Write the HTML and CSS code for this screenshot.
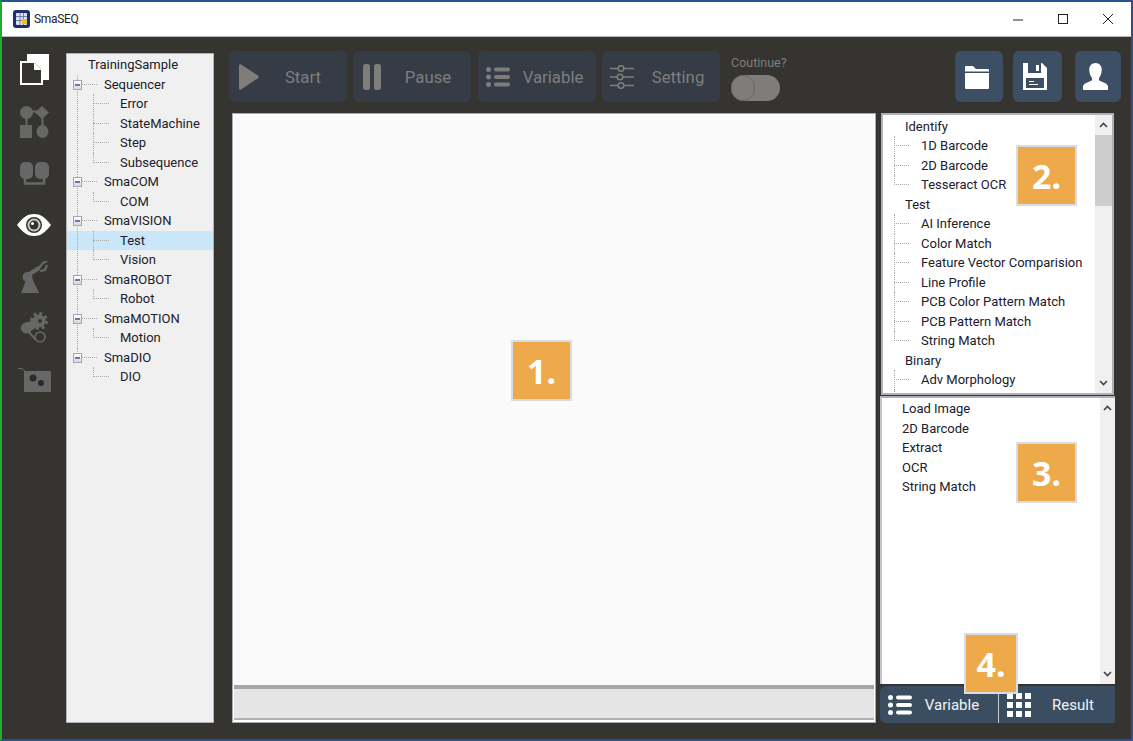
FILE: index.html
```html
<!DOCTYPE html>
<html lang="en">
<head>
    <meta charset="UTF-8">
    <meta name="viewport" content="width=device-width, initial-scale=1.0">
    <title>SmaSEQ</title>
    <link rel="stylesheet" href="styles.css">
</head>
<body>
<div class="window">
    <header class="titlebar">
        <svg class="app-icon" width="17" height="18" viewBox="0 0 17 18">
            <rect width="17" height="18" rx="3" fill="#1c2f6e"/>
            <rect x="3" y="3" width="11" height="12" rx="1" fill="#dfe3ee"/>
            <path d="M3 6.500h11M3 10.500h11M7 3v12M10.500 3v12" stroke="#6f80aa" stroke-width="1"/>
            <rect x="9" y="9" width="5" height="5" fill="#f0c020"/>
        </svg>
        <span class="app-name">SmaSEQ</span>
        <div class="window-buttons">
            <svg width="12" height="12" viewBox="0 0 12 12"><path d="M1 7h10" stroke="#222" fill="none"/></svg>
            <svg width="12" height="12" viewBox="0 0 12 12"><rect x="1.5" y="1.5" width="9" height="9" stroke="#222" fill="none"/></svg>
            <svg width="12" height="12" viewBox="0 0 12 12"><path d="M1 1l10 10M11 1L1 11" stroke="#222" fill="none"/></svg>
        </div>
    </header>

    <div class="body">
        <nav class="rail">
            <div class="rail-slot">
                <svg width="29" height="31" viewBox="0 0 29 31">
                    <rect x="7" width="22" height="26" fill="#fff"/>
                    <rect y="7" width="23" height="24" fill="#fff"/>
                    <path d="M2 9h13l6 6v14H2z" fill="#353431"/>
                    <path d="M14 9h1l6 6v1h-7z" fill="#fff"/>
                </svg>
            </div>
            <div class="rail-slot">
                <svg width="29" height="32" viewBox="0 0 29 32" fill="#676767">
                    <circle cx="6.500" cy="6.500" r="6.500"/>
                    <path d="M22 0l7 6.500-7 6.500-7-6.500z"/>
                    <rect y="19" width="12" height="13"/>
                    <ellipse cx="22.500" cy="25.500" rx="6" ry="6.500"/>
                    <path d="M8 5.500h10M6.500 10v10M22.500 10v10" stroke="#676767" stroke-width="2"/>
                </svg>
            </div>
            <div class="rail-slot">
                <svg width="29" height="23" viewBox="0 0 29 23" fill="#676767">
                    <rect width="13" height="17" rx="5"/>
                    <rect x="15" width="14" height="17" rx="5"/>
                    <path d="M5 15v6.500h19V15" fill="none" stroke="#676767" stroke-width="2.500"/>
                </svg>
            </div>
            <div class="rail-slot">
                <svg width="34" height="22" viewBox="0 0 34 22">
                    <path d="M0 11C6 3 11 0 17 0s11 3 17 11c-6 8-11 11-17 11S6 19 0 11z" fill="#fff"/>
                    <circle cx="17" cy="11" r="8" fill="#353431"/>
                    <circle cx="17" cy="11" r="6.500" fill="#ccc"/>
                    <circle cx="17" cy="11" r="4.500" fill="#333"/>
                    <circle cx="15.500" cy="9.500" r="1.500" fill="#fff"/>
                </svg>
            </div>
            <div class="rail-slot">
                <svg width="27" height="32" viewBox="0 0 27 32" fill="#676767">
                    <path d="M0 32l6-15h5l7 15z"/>
                    <circle cx="6.500" cy="16" r="5"/>
                    <path d="M7 14L18 7" stroke="#676767" stroke-width="4" fill="none"/>
                    <path d="M17 8l5-6 4-2M19 10l5-1 2-5" stroke="#676767" stroke-width="2.200" fill="none"/>
                </svg>
            </div>
            <div class="rail-slot">
                <svg width="27" height="32" viewBox="0 0 27 32" fill="#676767">
                    <circle cx="18" cy="9" r="6.500"/>
                    <circle cx="18" cy="9" r="7.500" fill="none" stroke="#676767" stroke-width="3" stroke-dasharray="3 2.900"/>
                    <circle cx="5.500" cy="16" r="5.500"/>
                    <path d="M4 11l12-4 3 6-12 8z"/>
                    <circle cx="19" cy="25" r="5" fill="none" stroke="#676767" stroke-width="1.500"/>
                    <path d="M7 19l8 9" stroke="#676767" stroke-width="2"/>
                    <circle cx="19" cy="9" r="2" fill="#353431"/>
                </svg>
            </div>
            <div class="rail-slot">
                <svg width="33" height="24" viewBox="0 0 33 24" fill="#676767">
                    <path d="M0 0h4l2.500 2.500H7V3h25a1 1 0 0 1 1 1v19a1 1 0 0 1-1 1H6V3L3.500 1H0z"/>
                    <circle cx="15" cy="10" r="3.500" fill="#2b2a28"/>
                    <circle cx="23" cy="15" r="3" fill="#2b2a28"/>
                </svg>
            </div>
        </nav>

        <aside class="panel project-tree">
            <ul class="tree">
                <li class="root"><span class="row">TrainingSample</span>
                    <ul>
                        <li class="group"><i class="expander"></i><span class="row">Sequencer</span>
                            <ul>
                                <li><span class="row">Error</span></li>
                                <li><span class="row">StateMachine</span></li>
                                <li><span class="row">Step</span></li>
                                <li><span class="row">Subsequence</span></li>
                            </ul>
                        </li>
                        <li class="group"><i class="expander"></i><span class="row">SmaCOM</span>
                            <ul>
                                <li><span class="row">COM</span></li>
                            </ul>
                        </li>
                        <li class="group"><i class="expander"></i><span class="row">SmaVISION</span>
                            <ul>
                                <li><span class="row selected">Test</span></li>
                                <li><span class="row">Vision</span></li>
                            </ul>
                        </li>
                        <li class="group"><i class="expander"></i><span class="row">SmaROBOT</span>
                            <ul>
                                <li><span class="row">Robot</span></li>
                            </ul>
                        </li>
                        <li class="group"><i class="expander"></i><span class="row">SmaMOTION</span>
                            <ul>
                                <li><span class="row">Motion</span></li>
                            </ul>
                        </li>
                        <li class="group"><i class="expander"></i><span class="row">SmaDIO</span>
                            <ul>
                                <li><span class="row">DIO</span></li>
                            </ul>
                        </li>
                    </ul>
                </li>
            </ul>
        </aside>

        <main class="content">
            <div class="toolbar">
                <button class="tool tool-start">
                    <svg width="20" height="26" viewBox="0 0 20 26"><path d="M0 1.500C0 .5 1 0 2 .5l17 11c1 .7 1 2 0 2.700L2 25.500c-1 .5-2 0-2-1z" fill="#7f7d7a"/></svg>
                    <span class="tool-label">Start</span>
                </button>
                <button class="tool tool-pause">
                    <svg width="18" height="26" viewBox="0 0 18 26" fill="#7f7d7a"><rect width="7" height="26" rx="2.500"/><rect x="11" width="7" height="26" rx="2.500"/></svg>
                    <span class="tool-label">Pause</span>
                </button>
                <button class="tool tool-variable">
                    <svg width="24" height="20" viewBox="0 0 24 20" fill="#7f7d7a"><circle cx="2.500" cy="2.500" r="2.500"/><circle cx="2.500" cy="10" r="2.500"/><circle cx="2.500" cy="17.500" r="2.500"/><rect x="8" y="0.500" width="16" height="4" rx="2"/><rect x="8" y="8" width="16" height="4" rx="2"/><rect x="8" y="15.500" width="16" height="4" rx="2"/></svg>
                    <span class="tool-label">Variable</span>
                </button>
                <button class="tool tool-setting">
                    <svg width="24" height="24" viewBox="0 0 24 24" fill="none" stroke="#7f7d7a" stroke-width="1.500"><path d="M0 3.500h8m6 0h10M0 12h7m6 0h11M0 20.500h8m6 0h10"/><circle cx="11" cy="3.500" r="2.800"/><circle cx="10" cy="12" r="2.800"/><circle cx="11" cy="20.500" r="2.800"/></svg>
                    <span class="tool-label">Setting</span>
                </button>
                <div class="continue">
                    <span class="continue-label">Coutinue?</span>
                    <span class="toggle"><i class="knob"></i></span>
                </div>
                <div class="file-buttons">
                    <button class="square folder">
                        <svg width="24" height="24" viewBox="0 0 24 24" fill="#fff"><path d="M0 2a1 1 0 0 1 1-1h7l3 3h12a1 1 0 0 1 1 1v1.500H0z"/><path d="M0 8h24v15a1 1 0 0 1-1 1H1a1 1 0 0 1-1-1z"/></svg>
                    </button>
                    <button class="square save">
                        <svg width="24" height="27" viewBox="0 0 24 27"><path d="M0 0h19l5 5v22H0z" fill="#fff"/><rect x="5" y="0" width="13" height="10" fill="#3c4f65"/><rect x="13" y="2" width="3" height="6" fill="#fff"/><rect x="3" y="15" width="18" height="10" fill="#3c4f65"/><path d="M6 18h5v1H6zM6 21h9v1H6z" fill="#fff"/></svg>
                    </button>
                    <button class="square user">
                        <svg width="25" height="27" viewBox="0 0 26 28" fill="#fff"><path d="M13 0c4 0 6.500 3 6.500 7 0 3-1 6-2.500 8-1 1.500-.5 3 1 3.600 3 1.200 7 2.400 8 5.400v4H0v-4c1-3 5-4.200 8-5.400 1.500-.6 2-2.100 1-3.600-1.500-2-2.500-5-2.500-8 0-4 2.500-7 6.500-7z"/></svg>
                    </button>
                </div>
            </div>

            <div class="workspace">
                <section class="panel canvas-panel">
                    <div class="canvas"></div>
                    <div class="status"></div>
                </section>

                <section class="side">
                    <div class="panel library">
                        <ul class="tree tools-tree">
                            <li class="cat"><span class="row">Identify</span>
                                <ul>
                                    <li><span class="row">1D Barcode</span></li>
                                    <li><span class="row">2D Barcode</span></li>
                                    <li><span class="row">Tesseract OCR</span></li>
                                </ul>
                            </li>
                            <li class="cat"><span class="row">Test</span>
                                <ul>
                                    <li><span class="row">AI Inference</span></li>
                                    <li><span class="row">Color Match</span></li>
                                    <li><span class="row">Feature Vector Comparision</span></li>
                                    <li><span class="row">Line Profile</span></li>
                                    <li><span class="row">PCB Color Pattern Match</span></li>
                                    <li><span class="row">PCB Pattern Match</span></li>
                                    <li><span class="row">String Match</span></li>
                                </ul>
                            </li>
                            <li class="cat"><span class="row">Binary</span>
                                <ul>
                                    <li><span class="row">Adv Morphology</span></li>
                                    <li><span class="row">&nbsp;</span></li>
                                </ul>
                            </li>
                        </ul>
                        <div class="scrollbar">
                            <svg class="chevron" width="9" height="6" viewBox="0 0 9 6"><path d="M1 5l3.500-3.500L8 5" fill="none" stroke="#444" stroke-width="1.600"/></svg>
                            <div class="track"><div class="thumb"></div></div>
                            <svg class="chevron" width="9" height="6" viewBox="0 0 9 6"><path d="M1 1l3.500 3.500L8 1" fill="none" stroke="#444" stroke-width="1.600"/></svg>
                        </div>
                    </div>

                    <div class="steps-box">
                        <ul class="steps">
                            <li>Load Image</li>
                            <li>2D Barcode</li>
                            <li>Extract</li>
                            <li>OCR</li>
                            <li>String Match</li>
                        </ul>
                        <div class="scrollbar plain">
                            <svg class="chevron" width="9" height="6" viewBox="0 0 9 6"><path d="M1 5l3.500-3.500L8 5" fill="none" stroke="#444" stroke-width="1.600"/></svg>
                            <div class="track"></div>
                            <svg class="chevron" width="9" height="6" viewBox="0 0 9 6"><path d="M1 1l3.500 3.500L8 1" fill="none" stroke="#444" stroke-width="1.600"/></svg>
                        </div>
                    </div>

                    <div class="tabs">
                        <button class="tab tab-variable">
                            <svg width="24" height="20" viewBox="0 0 24 20" fill="#fff"><circle cx="2.500" cy="2.500" r="2.500"/><circle cx="2.500" cy="10" r="2.500"/><circle cx="2.500" cy="17.500" r="2.500"/><rect x="8" y="0.500" width="16" height="4" rx="2"/><rect x="8" y="8" width="16" height="4" rx="2"/><rect x="8" y="15.500" width="16" height="4" rx="2"/></svg>
                            <span>Variable</span>
                        </button>
                        <button class="tab tab-result">
                            <svg width="24" height="24" viewBox="0 0 24 24" fill="#fff"><rect width="6" height="6"/><rect x="9" width="6" height="6"/><rect x="18" width="6" height="6"/><rect y="9" width="6" height="6"/><rect x="9" y="9" width="6" height="6"/><rect x="18" y="9" width="6" height="6"/><rect y="18" width="6" height="6"/><rect x="9" y="18" width="6" height="6"/><rect x="18" y="18" width="6" height="6"/></svg>
                            <span>Result</span>
                        </button>
                    </div>
                </section>
            </div>
        </main>
    </div>

    <div class="badge badge-1">1.</div>
    <div class="badge badge-2">2.</div>
    <div class="badge badge-3">3.</div>
    <div class="badge badge-4">4.</div>
</div>
</body>
</html>
```

FILE: styles.css
```css
* {
    box-sizing: border-box;
}
html, body {
    margin: 0;
    height: 100%;
    overflow: hidden;
}
body {
    font-family: Roboto, Arial, sans-serif;
    font-size: 13px;
    color: #20202c;
    background: #fff;
}
button {
    font-family: inherit;
    border: none;
    padding: 0;
    cursor: pointer;
}
ul {
    list-style: none;
    margin: 0;
    padding: 0;
}

.window {
    position: relative;
    width: 1133px;
    height: 741px;
    display: flex;
    flex-direction: column;
    border-top: 2px solid #2b5190;
    border-left: 2px solid #1fae2c;
    border-right: 2px solid #2b5190;
    border-bottom: 2px solid #2b5190;
}

.titlebar {
    height: 35px;
    display: flex;
    align-items: center;
    padding: 0 0 0 11px;
    background: #fff;
    border-bottom: 1px solid #b8b8b8;
}
.app-name {
    margin-left: 4px;
    font-size: 12px;
    letter-spacing: -0.3px;
    color: #222;
}
.window-buttons {
    margin-left: auto;
    margin-right: 17px;
    display: flex;
    gap: 33px;
}

.body {
    flex: 1;
    display: flex;
    min-height: 0;
    background: #353431;
    padding: 14px 10px 16px 15px;
}

.rail {
    width: 47px;
    margin-top: -7px;
    padding-right: 13px;
}
.rail-slot {
    height: 51.7px;
    display: flex;
    align-items: center;
    justify-content: center;
}

.panel {
    background: #f0f0f0;
    border: 2px solid #b0b0b8;
}
.project-tree {
    width: 148px;
    margin-left: 2px;
    margin-top: 2px;
    border-width: 1px;
    overflow: hidden;
}

/* tree with dotted connectors */
.tree {
    position: relative;
    padding-top: 1px;
}
.tree .row {
    display: block;
    height: 19.5px;
    line-height: 19px;
    white-space: nowrap;
}
.tree li {
    position: relative;
}
.project-tree .root > .row {
    padding-left: 21px;
}
.project-tree .group > .row {
    padding-left: 37px;
}
.project-tree .group li > .row {
    padding-left: 53px;
}
.project-tree .row.selected {
    background: #cae7f9;
}
/* horizontal dots */
.project-tree .group::before,
.project-tree .group li::before,
.tools-tree .cat li::before {
    content: "";
    position: absolute;
    top: 9px;
    height: 0;
    border-top: 1px dotted #aaa;
}
/* vertical dots */
.project-tree .group::after,
.project-tree .group li::after,
.tools-tree .cat li::after {
    content: "";
    position: absolute;
    top: 0;
    bottom: 0;
    width: 0;
    border-left: 1px dotted #aaa;
}
.project-tree .group::before {
    left: 15px;
    width: 15px;
}
.project-tree .group::after {
    left: 10px;
}
.project-tree .group:last-child::after {
    bottom: auto;
    height: 10px;
}
.project-tree .group li::before {
    left: 26px;
    width: 16px;
}
.project-tree .group li::after {
    left: 26px;
}
.project-tree .group li:last-child::after,
.tools-tree .cat ul li:last-child::after {
    bottom: auto;
    height: 10px;
}
.expander {
    position: absolute;
    z-index: 1;
    left: 6px;
    top: 5px;
    width: 9px;
    height: 10px;
    border: 1px solid #a4a4b2;
    background: linear-gradient(#fff, #d8d8de);
}
.expander::after {
    content: "";
    position: absolute;
    left: 1px;
    right: 1px;
    top: 3px;
    height: 2px;
    background: #6a78a8;
}

.content {
    flex: 1;
    min-width: 0;
    margin-left: 15px;
    display: flex;
    flex-direction: column;
}

.toolbar {
    display: flex;
    height: 51px;
    gap: 6px;
    margin-bottom: 11px;
}
.tool {
    width: 118px;
    height: 51px;
    flex: none;
    display: flex;
    align-items: center;
    padding-left: 10px;
    background: #353c46;
    border-radius: 6px;
    color: #7e7e7e;
}
.tool svg {
    flex: none;
}
.tool-label {
    flex: 1;
    font-size: 16.8px;
    text-align: center;
}
.tool-pause .tool-label {
    padding-left: 4px;
}
.tool-variable {
    margin-left: 1px;
    padding-left: 8px;
}
.tool-setting {
    padding-left: 8px;
}
.tool-setting .tool-label {
    padding-left: 2px;
}
.continue {
    margin-left: 5px;
    width: 60px;
    display: flex;
    flex-direction: column;
    align-items: flex-start;
}
.continue-label {
    font-size: 12.5px;
    line-height: 16px;
    margin-top: 4px;
    color: #7e7e7e;
}
.toggle {
    display: block;
    margin-top: 4px;
    width: 49px;
    height: 26px;
    border-radius: 13px;
    background: #7f7d7a;
}
.knob {
    display: block;
    width: 24px;
    height: 26px;
    border-radius: 13px;
    border: 1px solid #666;
    background: #7f7d7a;
}
.file-buttons {
    margin-left: auto;
    display: flex;
}
.square {
    height: 51px;
    flex: none;
    display: flex;
    align-items: center;
    justify-content: center;
    padding-right: 5px;
    background: #3c4f65;
    border-radius: 6px;
}
.folder {
    width: 48px;
}
.save {
    width: 49px;
    margin-left: 10px;
}
.user {
    width: 46px;
    margin-left: 13px;
}

.workspace {
    flex: 1;
    min-height: 0;
    display: flex;
    margin: 0 6px 0 3px;
}
.canvas-panel {
    width: 644px;
    display: flex;
    flex-direction: column;
    background: #fff;
    border-color: #a9a9b1;
    border-width: 1px;
    padding: 1px 1px 2px;
}
.canvas {
    flex: 1;
    background: #fafafa;
    border-bottom: 4px solid #a6a6a6;
}
.status {
    height: 31px;
    background: #e5e5e5;
    border-bottom: 2px solid #b0b0b8;
}

.side {
    flex: 1;
    min-width: 0;
    margin-left: 4px;
    display: flex;
    flex-direction: column;
}
.library {
    height: 282px;
    flex: none;
    margin: 0 1px;
    display: flex;
    background: #fff;
    overflow: hidden;
}
.tools-tree {
    flex: 1;
    min-width: 0;
    padding-top: 1.5px;
}
.tools-tree .cat > .row {
    padding-left: 22px;
}
.tools-tree .cat li > .row {
    padding-left: 38px;
}
.tools-tree .cat li::before {
    left: 11px;
    width: 15px;
}
.tools-tree .cat li::after {
    left: 11px;
}

.scrollbar {
    width: 17px;
    flex: none;
    display: flex;
    flex-direction: column;
    align-items: center;
    background: #f0f0f0;
}
.chevron {
    flex: none;
    margin: 7px 0;
}
.track {
    flex: 1;
    width: 100%;
}
.thumb {
    height: 71px;
    background: #cdcdcd;
}

.steps-box {
    flex: 1;
    min-height: 0;
    display: flex;
    margin-top: 1px;
    background: #fff;
    border-top: 2px solid #b0b0b8;
    border-left: 2px solid #c4c4ca;
}
.steps {
    flex: 1;
    padding: 1px 0 0 20px;
}
.steps li {
    height: 19.5px;
    line-height: 19px;
}
.plain {
    width: 15px;
}

.tabs {
    height: 37px;
    flex: none;
    margin-top: 2px;
    display: flex;
    background: #3b4d61;
    border-radius: 6px 0 0 6px;
}
.tab {
    display: flex;
    align-items: center;
    padding-left: 8px;
    background: none;
    color: #f0f4f8;
    font-size: 15px;
}
.tab span {
    flex: 1;
    text-align: center;
}
.tab-variable {
    width: 118px;
    padding-right: 6px;
}
.tab-result {
    flex: 1;
    border-left: 1px solid #c8ccd0;
}

/* numbered callouts that sit over the screenshot */
.badge {
    position: absolute;
    display: flex;
    align-items: center;
    justify-content: center;
    background: #eea94b;
    border: 2px solid #d6dde3;
    color: #fff;
    font-family: "Noto Sans", Arial, sans-serif;
    font-size: 34px;
    font-weight: 700;
}
.badge-1 {
    left: 509px;
    top: 338px;
    width: 61px;
    height: 61px;
}
.badge-2 {
    left: 1014px;
    top: 143px;
    width: 61px;
    height: 61px;
}
.badge-3 {
    left: 1014px;
    top: 440px;
    width: 61px;
    height: 61px;
}
.badge-4 {
    left: 962px;
    top: 631px;
    width: 54px;
    height: 61px;
}
```
